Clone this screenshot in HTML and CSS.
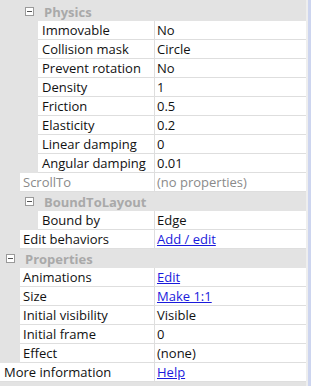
FILE: index.html
```html
<!DOCTYPE html>
<html lang="en">
<head>
  <meta charset="UTF-8" />
  <title>Properties</title>
  <link rel="stylesheet" href="styles.css">
</head>
<body>
  <div class="panel">
    <div class="grid">
      <!-- Physics behavior -->
      <div class="head lvl2"><span class="box"></span>Physics</div>
      <div class="row lvl2"><div class="name">Immovable</div><div class="val">No</div></div>
      <div class="row lvl2"><div class="name">Collision mask</div><div class="val">Circle</div></div>
      <div class="row lvl2"><div class="name">Prevent rotation</div><div class="val">No</div></div>
      <div class="row lvl2"><div class="name">Density</div><div class="val">1</div></div>
      <div class="row lvl2"><div class="name">Friction</div><div class="val">0.5</div></div>
      <div class="row lvl2"><div class="name">Elasticity</div><div class="val">0.2</div></div>
      <div class="row lvl2"><div class="name">Linear damping</div><div class="val">0</div></div>
      <div class="row lvl2"><div class="name">Angular damping</div><div class="val">0.01</div></div>
      <div class="row lvl1 dim"><div class="name">ScrollTo</div><div class="val">(no properties)</div></div>

      <!-- BoundToLayout behavior -->
      <div class="head lvl2"><span class="box"></span>BoundToLayout</div>
      <div class="row lvl2"><div class="name">Bound by</div><div class="val">Edge</div></div>
      <div class="row lvl1"><div class="name">Edit behaviors</div><div class="val"><a href="#">Add / edit</a></div></div>

      <!-- Properties -->
      <div class="head lvl1"><span class="box"></span>Properties</div>
      <div class="row lvl1"><div class="name">Animations</div><div class="val"><a href="#">Edit</a></div></div>
      <div class="row lvl1"><div class="name">Size</div><div class="val"><a href="#">Make 1:1</a></div></div>
      <div class="row lvl1"><div class="name">Initial visibility</div><div class="val">Visible</div></div>
      <div class="row lvl1"><div class="name">Initial frame</div><div class="val">0</div></div>
      <div class="row lvl1"><div class="name">Effect</div><div class="val">(none)</div></div>
      <div class="row lvl0"><div class="name">More information</div><div class="val"><a href="#">Help</a></div></div>
    </div>
    <div class="scroll"></div>
  </div>
</body>
</html>
```

FILE: styles.css
```css
body {
  margin: 0;
  font-family: "Open Sans", "Noto Sans", sans-serif;
  font-size: 13px;
  color: #111;
  background: #e3e3e3;
}
.panel {
  display: flex;
  width: 311px;
  height: 386px;
  overflow: hidden;
}
.grid {
  width: 306px;
  padding-top: 2px;
}
.scroll {
  flex: 1;
  background: #cdd5ef;
  border-left: 2px solid #eeeeee;
}
.row {
  display: flex;
  height: 18px;
  line-height: 18px;
  background: #fff;
  border-bottom: 1px solid #dedede;
}
.lvl0 { margin-left: 0; }
.lvl1 { margin-left: 20px; }
.lvl2 { margin-left: 38px; }
.name {
  padding-left: 4px;
  white-space: nowrap;
  overflow: hidden;
}
.lvl0 .name { width: 150px; }
.lvl1 .name { padding-left: 3px; width: 131px; }
.lvl2 .name { width: 112px; }
.val {
  flex: 1;
  padding-left: 2px;
  border-left: 1px solid #dedede;
  white-space: nowrap;
}
.dim .name,
.dim .val {
  color: #8a8a8a;
}
a {
  color: #1a1adc;
  text-decoration: underline;
}
.head {
  display: flex;
  align-items: center;
  height: 19px;
  font-weight: bold;
  color: #a9a9a9;
}
.head.lvl2 { margin-left: 25px; }
.head.lvl1 { margin-left: 6px; }
.box {
  width: 7px;
  height: 7px;
  border: 1px solid #9a9a9a;
  background: #fff;
  margin-right: 10px;
  position: relative;
}
.box::after {
  content: "";
  position: absolute;
  left: 1px;
  top: 3px;
  width: 5px;
  height: 1px;
  background: #555;
}
```
